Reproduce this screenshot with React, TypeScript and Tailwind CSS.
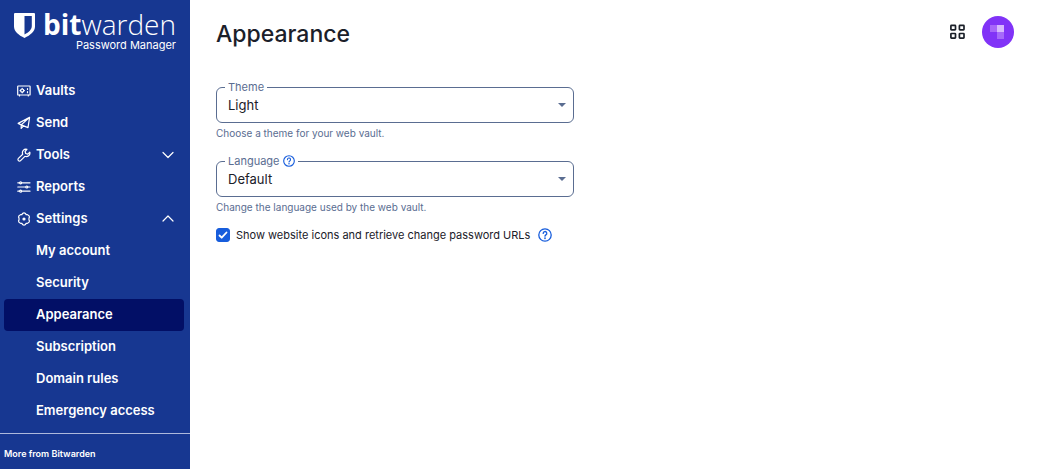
import { useState } from "react";
import type { ReactNode } from "react";

const iconProps = {
    width: 14,
    height: 14,
    viewBox: "0 0 14 14",
    fill: "none",
    stroke: "currentColor",
    strokeWidth: 1.2,
    strokeLinecap: "round" as const,
    strokeLinejoin: "round" as const,
    "aria-hidden": true,
};

const VaultIcon = () => (
    <svg {...iconProps}>
        <rect x="0.7" y="2" width="12.4" height="9" rx="0.6" />
        <circle cx="5.2" cy="6.6" r="1.6" />
        <path d="M5.2 4.4v.6M5.2 8.2v.6M3 6.6h.6M6.800 6.600h.6M10.500 4.500v1M10.500 7.700v1M2.500 11v1M11.300 11v1" />
    </svg>
);

const SendIcon = () => (
    <svg {...iconProps}>
        <path d="M12.6 1.3 1.2 7.4l3 1.500 6.800 2.700 1.600-10.300ZM12.600 1.300 4.200 8.900v3.500l2.300-2.500" />
    </svg>
);

const ToolsIcon = () => (
    <svg {...iconProps}>
        <path d="M9.900 1.300a3.600 3.600 0 0 0-4.200 4.900L1.400 10.400a1.500 1.500 0 0 0 2.200 2.200L7.900 8.300a3.600 3.600 0 0 0 4.900-4.200l-2.100 2-2-.6-.6-2 1.800-2.200Z" />
    </svg>
);

const ReportsIcon = () => (
    <svg {...iconProps}>
        <path d="M.8 2.800h1.700M4.700 2.800h8.300M.8 7h7.800M10.900 7h2.100M.8 11.200h1.700M4.700 11.200h8.300" />
        <circle cx="3.600" cy="2.800" r="1" />
        <circle cx="9.800" cy="7" r="1" />
        <circle cx="3.600" cy="11.200" r="1" />
    </svg>
);

const SettingsIcon = () => (
    <svg {...iconProps}>
        <path d="M5.500 1.500q1.500-1.200 3 0l.6 1.100 1.400.1q1.800.6 2 2.300L12 6.100v1.800l.5 1.100q-.2 1.700-2 2.300l-1.400.1-.6 1.100q-1.500 1.200-3 0l-.6-1.100-1.400-.1q-1.800-.6-2-2.300L2 7.900V6.100L1.500 5q.2-1.700 2-2.300l1.400-.1.6-1.100Z" />
        <circle cx="7" cy="7" r="1" fill="currentColor" />
    </svg>
);

const Chevron = ({ up }: { up?: boolean }) => (
    <svg width="12" height="8" viewBox="0 0 12 8" fill="none" stroke="currentColor" strokeWidth="1.2" strokeLinecap="round" strokeLinejoin="round" aria-hidden="true">
        <path d={up ? "M1 6 6 1l5 5" : "M1 1.500l5 5 5-5"} />
    </svg>
);

const HelpLink = ({ label, large }: { label: string; large?: boolean }) => (
    <a href="#help" aria-label={label} className="text-[#175ddc]">
        <svg
            className={large ? "size-[14px]" : "size-3"}
            viewBox="0 0 14 14"
            fill="none"
            stroke="currentColor"
            strokeWidth="1.3"
            strokeLinecap="round"
            aria-hidden="true"
        >
            <circle cx="7" cy="7" r="6.2" />
            <path d="M5.200 5.400a1.800 1.800 0 1 1 2.700 1.500c-.6.4-.9.7-.9 1.300" />
            <circle cx="7" cy="10.2" r=".3" fill="currentColor" />
        </svg>
    </a>
);

const Logo = () => (
    <a href="#vaults" className="flex items-start gap-2 pl-[14px] pt-3 font-['Open_Sans',sans-serif] text-white">
        <svg width="21" height="26" viewBox="0 0 21 26" aria-hidden="true" className="shrink-0">
            <path
                fill="currentColor"
                fillRule="evenodd"
                d="M1 1h19a1 1 0 0 1 1 1v12.500c0 5-4.500 8.500-10.500 11.500C4.500 23 0 19.500 0 14.500V2a1 1 0 0 1 1-1Zm9.500 3v18.500c4.500-2.400 7.300-5 7.300-8.500V4h-7.300Z"
            />
        </svg>
        <span className="flex flex-col items-end">
            <span className="text-[28px] leading-6">
                <span className="font-bold">bit</span>
                <span className="font-light">warden</span>
            </span>
            <span className="pt-px font-[Inter,sans-serif] text-[11px] leading-4">Password Manager</span>
        </span>
    </a>
);

const navItems = [
    { label: "Vaults", icon: <VaultIcon /> },
    { label: "Send", icon: <SendIcon /> },
    { label: "Tools", icon: <ToolsIcon />, expandable: true },
    { label: "Reports", icon: <ReportsIcon /> },
];

const settingsItems = ["My account", "Security", "Appearance", "Subscription", "Domain rules", "Emergency access"];

function NavGroup({ label, icon, open, onToggle }: { label: string; icon: ReactNode; open: boolean; onToggle: () => void }) {
    return (
        <button type="button" aria-expanded={open} onClick={onToggle} className="flex h-8 w-full items-center gap-[5px] rounded pl-[13px] pr-2.5 text-left">
            {icon}
            <span className="flex-1">{label}</span>
            <Chevron up={open} />
        </button>
    );
}

function Sidebar() {
    const [toolsOpen, setToolsOpen] = useState(false);
    const [settingsOpen, setSettingsOpen] = useState(true);

    return (
        <aside className="flex w-[190px] shrink-0 flex-col bg-[#173791] text-white">
            <Logo />
            <nav className="mt-[22px] flex-1 pl-1 pr-1.5 text-[13px] font-semibold">
                {navItems.map((item) =>
                    item.expandable ? (
                        <NavGroup key={item.label} label={item.label} icon={item.icon} open={toolsOpen} onToggle={() => setToolsOpen(!toolsOpen)} />
                    ) : (
                        <a key={item.label} href="#nav" className="flex h-8 items-center gap-[5px] rounded pl-[13px]">
                            {item.icon}
                            {item.label}
                        </a>
                    )
                )}
                <NavGroup label="Settings" icon={<SettingsIcon />} open={settingsOpen} onToggle={() => setSettingsOpen(!settingsOpen)} />
                {settingsOpen &&
                    settingsItems.map((label) => (
                        <a
                            key={label}
                            href="#settings"
                            aria-current={label === "Appearance" ? "page" : undefined}
                            className={`flex h-8 items-center rounded pl-8 ${label === "Appearance" ? "bg-[#020f66]" : ""}`}
                        >
                            {label}
                        </a>
                    ))}
            </nav>
            <div className="border-t border-[#aeb9dc] px-1 pb-[7px] pt-3 text-[9px] font-semibold leading-4">More from Bitwarden</div>
        </aside>
    );
}

function SelectField({ id, label, value, options, hint, help }: { id: string; label: string; value: string; options: string[]; hint: string; help?: ReactNode }) {
    return (
        <div>
            <fieldset className="relative rounded-md border border-[#5a6d91] pl-2">
                <legend className="flex h-4 items-center gap-1 px-[3px] text-[11px] leading-4 text-[#5a6d91]">
                    <label htmlFor={id}>{label}</label>
                    {help}
                </legend>
                <select
                    id={id}
                    defaultValue={value}
                    className="block h-[27px] w-full appearance-none bg-transparent pb-[7px] pl-[3px] pr-8 text-[13px] leading-5 text-[#1b2029] outline-none"
                >
                    {options.map((o) => (
                        <option key={o}>{o}</option>
                    ))}
                </select>
                <svg width="8" height="4" viewBox="0 0 8 4" aria-hidden="true" className="pointer-events-none absolute right-[7px] top-2 fill-[#5a6d91]">
                    <path d="M0 0h8L4 4Z" />
                </svg>
            </fieldset>
            <p className="mt-1 text-[10px] leading-3 text-[#5a6d91]">{hint}</p>
        </div>
    );
}

export default function App() {
    return (
        <div className="flex min-h-screen bg-white font-[Inter,sans-serif]">
            <Sidebar />
            <main className="min-w-0 flex-1 pl-[26px] pr-[30px] pt-4">
                <header className="flex items-start justify-between">
                    <h1 className="pt-0.5 text-[23px] font-medium leading-8 text-[#1b2029]">Appearance</h1>
                    <div className="flex items-center gap-4">
                        <button type="button" aria-label="Switch products">
                            <svg width="16" height="16" viewBox="0 0 16 16" fill="none" stroke="#1b2029" strokeWidth="1.7" aria-hidden="true" className="block">
                                <rect x="0.9" y="1.35" width="4.6" height="4.6" rx="0.6" />
                                <rect x="9.4" y="1.35" width="4.6" height="4.6" rx="0.6" />
                                <rect x="0.9" y="9.5" width="4.6" height="4.6" rx="0.6" />
                                <rect x="9.4" y="9.5" width="4.6" height="4.6" rx="0.6" />
                            </svg>
                        </button>
                        <button type="button" aria-label="Account" className="rounded-full">
                            <svg width="32" height="32" viewBox="0 0 32 32" aria-hidden="true" className="block">
                                <circle cx="16" cy="16" r="16" fill="#8133f7" />
                                <path fill="#a766f9" d="M8 9h7v7H8z" />
                                <path fill="#d6b8fd" d="M15 9h7v7h-7z" />
                                <path fill="#a669fa" d="M15 16h7v7h-7z" />
                            </svg>
                        </button>
                    </div>
                </header>
                <form className="mt-[29px] flex max-w-[358px] flex-col gap-[14px]">
                    <SelectField id="theme" label="Theme" value="Light" options={["Light", "Dark", "System"]} hint="Choose a theme for your web vault." />
                    <SelectField
                        id="language"
                        label="Language"
                        value="Default"
                        options={["Default", "English"]}
                        hint="Change the language used by the web vault."
                        help={<HelpLink label="Learn more about languages" />}
                    />
                    <div className="flex items-center">
                        <span className="relative mr-[6px] flex">
                            <input id="icons" type="checkbox" defaultChecked className="peer size-[14px] appearance-none rounded-[3px] border border-[#5a6d91] checked:border-[#175ddc] checked:bg-[#175ddc]" />
                            <svg viewBox="0 0 14 14" fill="none" stroke="white" strokeWidth="1.8" strokeLinecap="round" strokeLinejoin="round" aria-hidden="true" className="pointer-events-none absolute inset-0 hidden size-[14px] peer-checked:block">
                                <path d="m3.500 7.500 2.200 2.200 4.800-5.200" />
                            </svg>
                        </span>
                        <label htmlFor="icons" className="mr-2 whitespace-nowrap text-[11px] leading-4 text-[#1b2029]">
                            Show website icons and retrieve change password URLs
                        </label>
                        <HelpLink label="Learn more about website icons" large />
                    </div>
                </form>
            </main>
        </div>
    );
}
